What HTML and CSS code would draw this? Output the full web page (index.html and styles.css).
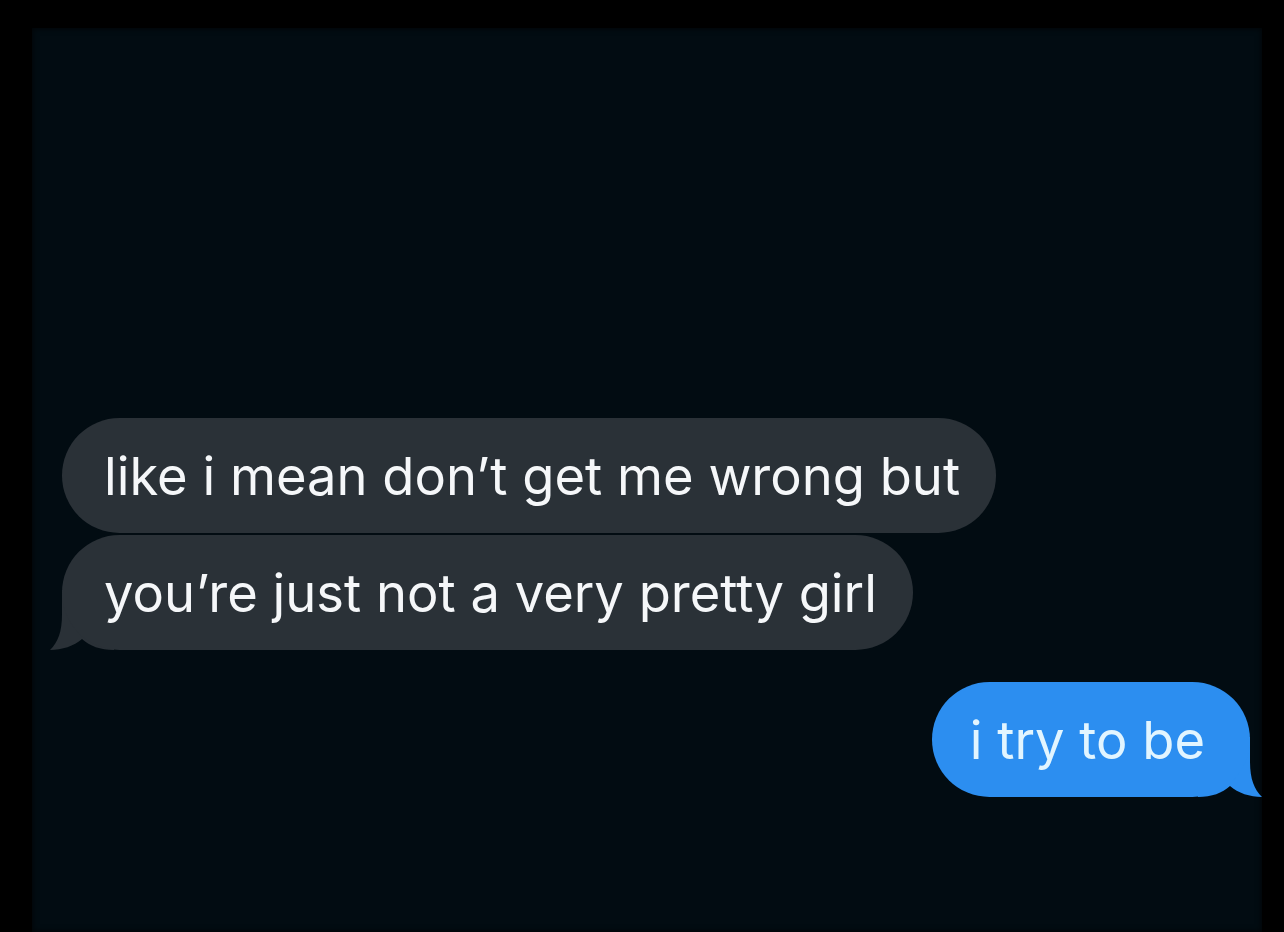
FILE: index.html
```html
<!DOCTYPE html>
<html lang="en">
<head>
  <meta charset="UTF-8">
  <meta name="viewport" content="width=device-width, initial-scale=1.0">
  <link rel="stylesheet" href="styles.css">
</head>
<body>
  <div class="screen">
    <div class="thread">
      <div class="bubble them">like i mean don’t get me wrong but</div>
      <div class="bubble them">you’re just not a very pretty girl<svg class="curl" viewBox="0 0 64 60" width="64" height="60"><path d="M12 0 L12 24 C12 42 8 52 0 60 C12 60 24 56 32 49 C40 56 50 60 64 60 L64 0 Z"/></svg></div>
      <div class="bubble me">i try to be<svg class="curl" viewBox="0 0 64 60" width="64" height="60"><path d="M12 0 L12 24 C12 42 8 52 0 60 C12 60 24 56 32 49 C40 56 50 60 64 60 L64 0 Z"/></svg></div>
    </div>
  </div>
</body>
</html>
```

FILE: styles.css
```css
body {
  margin: 0;
  height: 932px;
  overflow: hidden;
  background-color: black;
  font-family: 'Inter', 'Liberation Sans', sans-serif;
}

.screen {
  position: relative;
  z-index: 0;
  margin: 28px 22px 0 32px;
  height: 904px;
  overflow: hidden;
  background-color: #020c12;
  box-shadow: inset 0 0 6px rgba(0, 0, 0, 0.8);
}

.thread {
  display: flex;
  flex-direction: column;
  align-items: flex-start;
  gap: 2px;
  padding: 390px 12px 0 30px;
}

.bubble {
  position: relative;
  height: 115px;
  line-height: 117px;
  padding: 0 36px 0 42px;
  border-radius: 58px;
  font-size: 52.5px;
  white-space: nowrap;
}

.them {
  background-color: #2a3137;
  color: #f5f7f9;
}

.me {
  align-self: flex-end;
  margin-top: 30px;
  padding: 0 45px 0 38px;
  background-color: #2c8ef0;
  color: #e2f5ff;
}

/* little curl at the bottom corner, tucked under the bubble */
.curl {
  position: absolute;
  z-index: -1;
  bottom: 0;
  display: block;
}

.them .curl {
  left: -12px;
  fill: #2a3137;
}

.me .curl {
  right: -12px;
  fill: #2c8ef0;
  transform: scaleX(-1);
}
```
